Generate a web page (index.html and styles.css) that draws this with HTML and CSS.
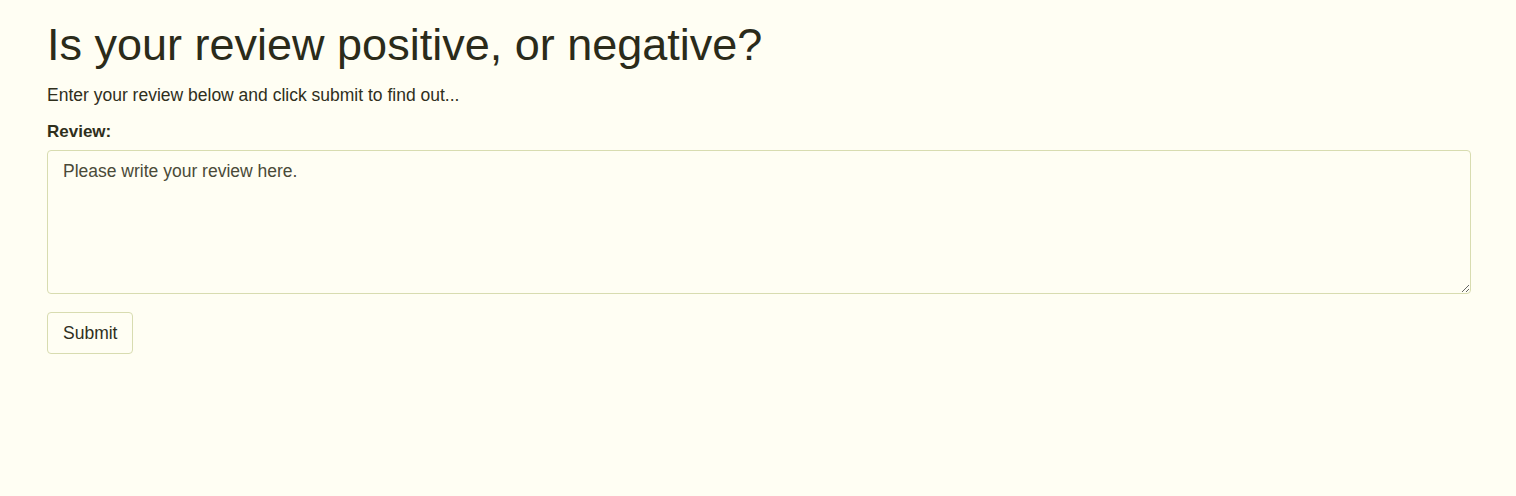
FILE: index.html
```html
<!DOCTYPE html>
<html>
<head>
<meta charset="utf-8">
<link rel="stylesheet" href="styles.css">
</head>
<body>
<div class="container">
  <h1 class="title">Is your review positive, or negative?</h1>
  <p class="lead">Enter your review below and click submit to find out...</p>
  <form class="review-form">
    <label class="field-label" for="review">Review:</label>
    <textarea id="review" class="review-input">Please write your review here.</textarea>
    <button type="button" class="btn">Submit</button>
  </form>
</div>
</body>
</html>
```
FILE: styles.css
```css
html, body {
  margin: 0;
  padding: 0;
}
body {
  background-color: #fffef3;
  font-family: "Liberation Sans", Arial, sans-serif;
  color: #2f2f1c;
  min-height: 496px;
}
.container {
  padding: 17px 45px 0 47px;
}
.title {
  margin: 0;
  font-size: 45px;
  font-weight: 400;
  line-height: 56px;
  color: #2b2b1a;
}
.lead {
  margin: 10px 0 0;
  font-size: 17.5px;
  line-height: 24px;
}
.review-form {
  display: flex;
  flex-direction: column;
  align-items: flex-start;
  margin-top: 13px;
}
.field-label {
  font-weight: 700;
  font-size: 17px;
  line-height: 24px;
  margin-bottom: 6px;
}
.review-input {
  box-sizing: border-box;
  width: 100%;
  height: 144px;
  padding: 9px 15px;
  border: 1px solid #d8dcb0;
  border-radius: 4px;
  background: transparent;
  font-family: "Liberation Sans", Arial, sans-serif;
  font-size: 17.5px;
  line-height: 23px;
  color: #4a4a38;
  resize: vertical;
}
.btn {
  margin-top: 18px;
  box-sizing: border-box;
  height: 42px;
  padding: 0 15px;
  border: 1px solid #d8dcb0;
  border-radius: 4px;
  background: transparent;
  font-family: "Liberation Sans", Arial, sans-serif;
  font-size: 17.5px;
  color: #2f2f1c;
}
```
